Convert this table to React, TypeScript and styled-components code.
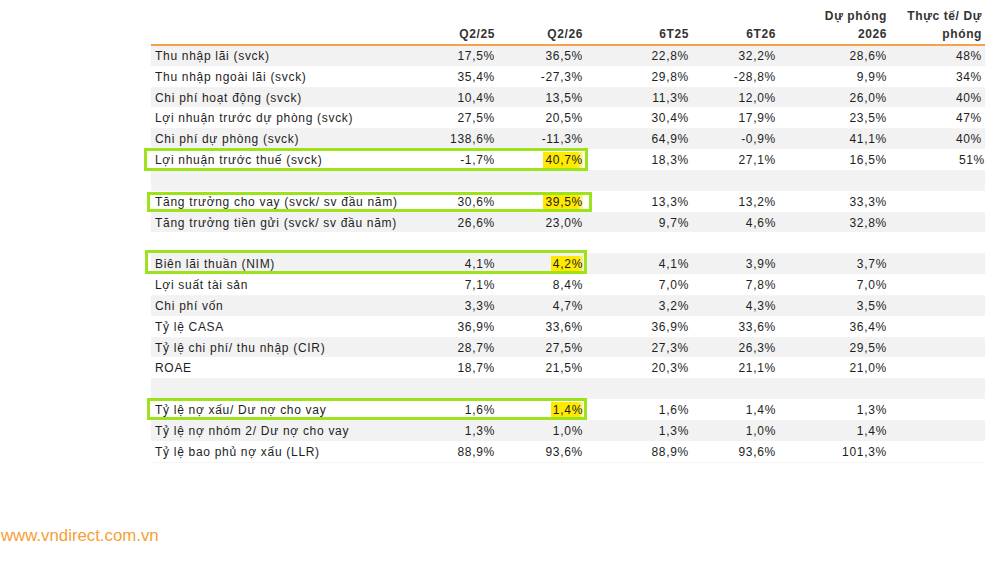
import styled, { createGlobalStyle } from 'styled-components'

const GlobalStyle = createGlobalStyle`
	html, body {
		margin: 0;
		padding: 0;
		background: #ffffff;
	}
	body {
		font-family: 'Liberation Sans', Arial, sans-serif;
		color: #1e1e1e;
	}
`

type BoxType = { l: number; w: number; t: number; b: number }

type RowType = {
	label?: string
	values?: string[]
	mark?: boolean
	box?: BoxType
}

const headers = [['Q2/25'], ['Q2/26'], ['6T25'], ['6T26'], ['Dự phóng', '2026'], ['Thực tế/ Dự', 'phóng']]

const rows: RowType[] = [
	{ label: 'Thu nhập lãi (svck)', values: ['17,5%', '36,5%', '22,8%', '32,2%', '28,6%', '48%'] },
	{ label: 'Thu nhập ngoài lãi (svck)', values: ['35,4%', '-27,3%', '29,8%', '-28,8%', '9,9%', '34%'] },
	{ label: 'Chi phí hoạt động (svck)', values: ['10,4%', '13,5%', '11,3%', '12,0%', '26,0%', '40%'] },
	{ label: 'Lợi nhuận trước dự phòng (svck)', values: ['27,5%', '20,5%', '30,4%', '17,9%', '23,5%', '47%'] },
	{ label: 'Chi phí dự phòng (svck)', values: ['138,6%', '-11,3%', '64,9%', '-0,9%', '41,1%', '40%'] },
	{
		label: 'Lợi nhuận trước thuế (svck)',
		values: ['-1,7%', '40,7%', '18,3%', '27,1%', '16,5%', '51%'],
		mark: true,
		box: { l: -7, w: 444, t: -2, b: -1 },
	},
	{},
	{
		label: 'Tăng trưởng cho vay (svck/ sv đầu năm)',
		values: ['30,6%', '39,5%', '13,3%', '13,2%', '33,3%', ''],
		mark: true,
		box: { l: -4, w: 445, t: 0, b: 0 },
	},
	{ label: 'Tăng trưởng tiền gửi (svck/ sv đầu năm)', values: ['26,6%', '23,0%', '9,7%', '4,6%', '32,8%', ''] },
	{},
	{
		label: 'Biên lãi thuần (NIM)',
		values: ['4,1%', '4,2%', '4,1%', '3,9%', '3,7%', ''],
		mark: true,
		box: { l: -6, w: 442, t: -4, b: 0 },
	},
	{ label: 'Lợi suất tài sản', values: ['7,1%', '8,4%', '7,0%', '7,8%', '7,0%', ''] },
	{ label: 'Chi phí vốn', values: ['3,3%', '4,7%', '3,2%', '4,3%', '3,5%', ''] },
	{ label: 'Tỷ lệ CASA', values: ['36,9%', '33,6%', '36,9%', '33,6%', '36,4%', ''] },
	{ label: 'Tỷ lệ chi phí/ thu nhập (CIR)', values: ['28,7%', '27,5%', '27,3%', '26,3%', '29,5%', ''] },
	{ label: 'ROAE', values: ['18,7%', '21,5%', '20,3%', '21,1%', '21,0%', ''] },
	{},
	{
		label: 'Tỷ lệ nợ xấu/ Dư nợ cho vay',
		values: ['1,6%', '1,4%', '1,6%', '1,4%', '1,3%', ''],
		mark: true,
		box: { l: -4, w: 440, t: -2, b: 0 },
	},
	{ label: 'Tỷ lệ nợ nhóm 2/ Dư nợ cho vay', values: ['1,3%', '1,0%', '1,3%', '1,0%', '1,4%', ''] },
	{ label: 'Tỷ lệ bao phủ nợ xấu (LLR)', values: ['88,9%', '93,6%', '88,9%', '93,6%', '101,3%', ''] },
]

const App = () => {
	return (
		<>
			<GlobalStyle />
			<Page>
				<Table>
					<HeaderRow>
						<HeadCell />
						{headers.map((lines, i) => (
							<HeadCell key={i}>
								{lines.map((line) => (
									<span key={line}>{line}</span>
								))}
							</HeadCell>
						))}
					</HeaderRow>
					{rows.map((row, i) => (
						<Row key={i} $shaded={i % 2 === 0}>
							<Label>{row.label}</Label>
							{(row.values ?? ['', '', '', '', '', '']).map((v, j) => (
								<Value key={j}>{row.mark && j === 1 ? <Marker>{v}</Marker> : v}</Value>
							))}
							{row.box && <Highlight $box={row.box} />}
						</Row>
					))}
				</Table>
				<Footer>www.vndirect.com.vn</Footer>
			</Page>
		</>
	)
}

const Page = styled.div`
	width: 1007px;
	height: 561px;
	display: flex;
	flex-direction: column;
	overflow: hidden;
`

const Table = styled.div`
	margin-left: 151px;
	width: 834px;
	display: flex;
	flex-direction: column;
`

const columns = `259px 85px 88px 106px 87px 111px 98px`

const HeaderRow = styled.div`
	display: grid;
	grid-template-columns: ${columns};
	align-items: end;
	height: 44px;
	border-bottom: 2px solid #f4a24c;
	box-sizing: content-box;
`

const HeadCell = styled.div`
	display: flex;
	flex-direction: column;
	align-items: flex-end;
	font-size: 12px;
	font-weight: bold;
	letter-spacing: 0.6px;
	line-height: 18px;
	color: #333333;
	padding-bottom: 1px;
	&:last-child {
		padding-right: 3px;
	}
`

const Row = styled.div<{ $shaded: boolean }>`
	position: relative;
	display: grid;
	grid-template-columns: ${columns};
	align-items: center;
	height: 20.84px;
	box-sizing: border-box;
	border-bottom: 1px solid ${({ $shaded }) => ($shaded ? '#ffffff' : '#f4f4f4')};
	background: ${({ $shaded }) => ($shaded ? '#f2f2f2' : '#ffffff')};
	font-size: 12px;
	letter-spacing: 0.7px;
	color: #1e1e1e;
`

const Label = styled.div`
	padding-left: 4px;
	white-space: nowrap;
`

const Value = styled.div`
	text-align: right;
	white-space: nowrap;
	&:last-of-type {
		padding-right: 3px;
	}
`

const Marker = styled.span`
	background: linear-gradient(to right, #ffe900 85%, rgba(255, 233, 0, 0.35));
	padding: 1px 0 1px 2px;
`

const Highlight = styled.div<{ $box: BoxType }>`
	position: absolute;
	left: ${({ $box }) => $box.l}px;
	width: ${({ $box }) => $box.w}px;
	top: ${({ $box }) => $box.t}px;
	bottom: ${({ $box }) => $box.b}px;
	border: 3px solid #9de31c;
	box-sizing: border-box;
	pointer-events: none;
`

const Footer = styled.div`
	margin-top: 63px;
	padding-left: 1px;
	font-size: 16.8px;
	line-height: 20px;
	color: #f7a035;
`

export default App
